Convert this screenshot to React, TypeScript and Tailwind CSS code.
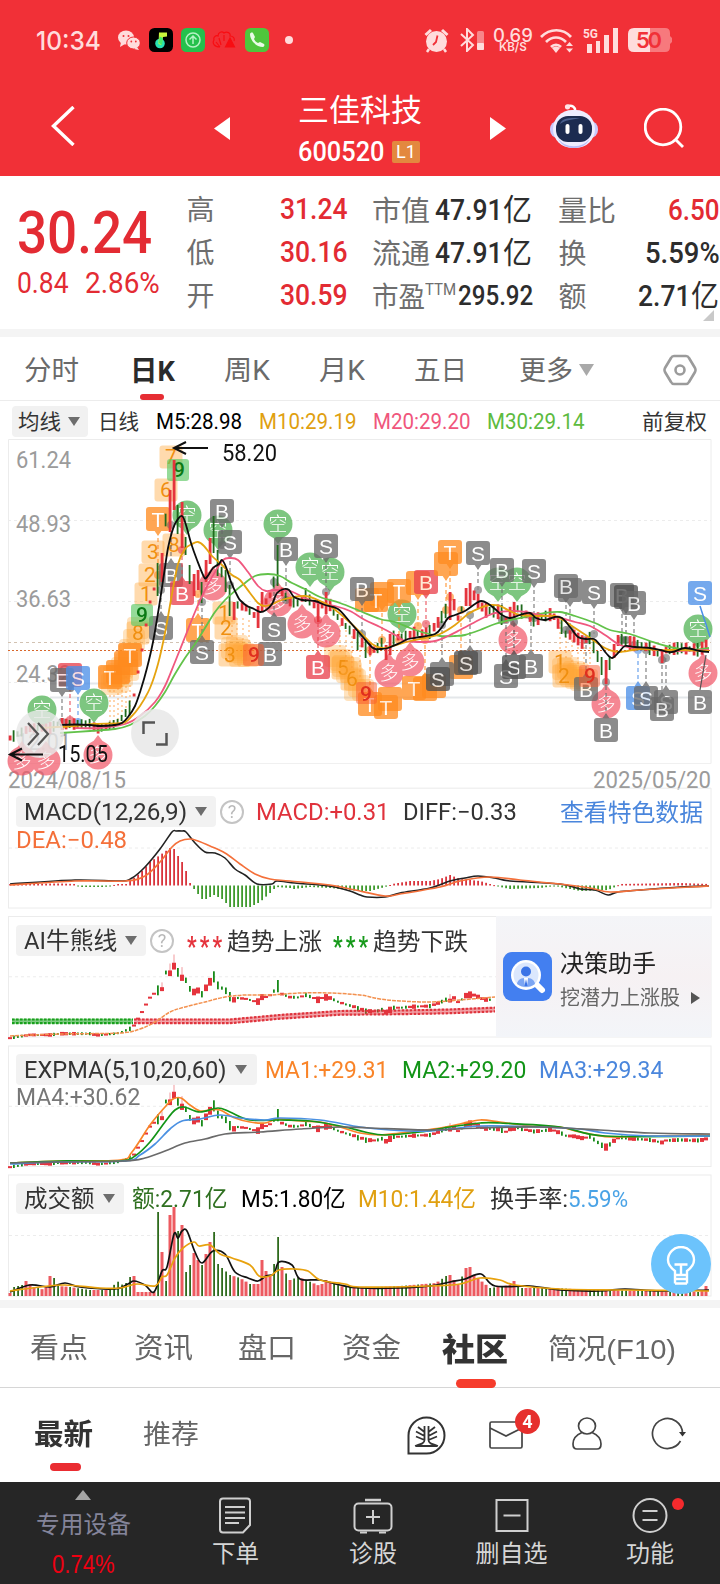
import { useLayoutEffect, useRef, useState } from "react";
import clsx from "clsx";

type Point = [number, number];

// "x,y x,y ..." -> points
function parse(raw: string): Point[] {
  return raw
    .trim()
    .split(/\s+/)
    .map((pair) => pair.split(",").map(Number) as Point);
}

function curve(raw: string) {
  const p = parse(raw);
  let d = `M${p[0][0]} ${p[0][1]}`;
  for (let i = 0; i < p.length - 1; i++) {
    const a = p[i - 1] ?? p[i];
    const b = p[i];
    const c = p[i + 1];
    const e = p[i + 2] ?? c;
    d += `C${b[0] + (c[0] - a[0]) / 6} ${b[1] + (c[1] - a[1]) / 6} ${c[0] - (e[0] - b[0]) / 6} ${c[1] - (e[1] - b[1]) / 6} ${c[0]} ${c[1]}`;
  }
  return d;
}

function valueAt(p: Point[], x: number) {
  if (x <= p[0][0]) return p[0][1];
  for (let i = 1; i < p.length; i++) {
    if (x <= p[i][0]) {
      const [x0, y0] = p[i - 1];
      const [x1, y1] = p[i];
      return y0 + ((y1 - y0) * (x - x0)) / (x1 - x0);
    }
  }
  return p[p.length - 1][1];
}

const noise = (i: number) => {
  const v = Math.sin(i * 12.9898) * 43758.5453;
  return v - Math.floor(v);
};

const RED = "#e5343d";
const GREEN = "#1f6a1c";

const price = parse(
  "10,738 20,733 30,728 50,728 60,724 75,724 90,724 97,729 115,724 122,718 130,708 134,695 138,672 142,650 146,625 150,602 154,589 158,580 162,566 166,520 170,510 174,490 178,518 182,525 186,546 190,574 194,588 198,580 202,592 206,570 210,550 214,535 218,565 222,572 226,585 230,600 234,610 238,605 246,608 254,615 258,618 262,600 268,602 274,582 278,566 282,592 290,602 298,603 306,595 314,605 322,605 328,602 340,620 350,630 360,640 366,648 376,650 384,642 388,649 392,638 400,637 418,633 430,632 440,620 448,608 452,598 458,618 466,600 470,590 476,598 484,610 500,612 506,620 514,606 524,613 534,620 552,614 560,625 566,634 574,636 582,642 590,638 598,655 604,672 608,668 616,648 622,640 630,643 650,648 660,655 666,650 680,648 700,650 709,642",
);

// [top, bottom, color] of the bars with a big range
const bigBars: Record<number, [number, number, string]> = {
  158: [563, 596, GREEN],
  162: [553, 582, RED],
  170: [490, 532, RED],
  174: [460, 510, RED],
  178: [505, 534, GREEN],
  182: [502, 548, RED],
  186: [537, 555, GREEN],
  190: [565, 584, GREEN],
  194: [574, 596, RED],
  198: [570, 590, RED],
  202: [582, 603, GREEN],
  206: [560, 582, RED],
  210: [538, 564, RED],
  214: [516, 553, GREEN],
  218: [550, 576, GREEN],
  226: [570, 592, GREEN],
  230: [585, 616, GREEN],
  234: [602, 620, RED],
  258: [606, 628, RED],
  262: [592, 612, RED],
  278: [545, 586, GREEN],
  306: [588, 602, GREEN],
  318: [600, 622, RED],
  326: [592, 614, RED],
  358: [632, 650, GREEN],
  366: [640, 658, GREEN],
  386: [645, 660, RED],
  390: [634, 655, RED],
  450: [592, 620, RED],
  466: [588, 606, RED],
  470: [583, 606, RED],
  502: [605, 625, GREEN],
  514: [602, 618, RED],
  562: [620, 634, GREEN],
  598: [651, 662, GREEN],
  602: [657, 675, GREEN],
  606: [660, 684, RED],
  614: [644, 658, RED],
  618: [635, 646, RED],
  662: [650, 663, RED],
  709: [636, 654, RED],
};

const candles = Array.from({ length: 175 }, (_, i) => {
  const x = 10 + i * 4;
  if (bigBars[x]) {
    const [top, bottom, color] = bigBars[x];
    return { x, top, bottom, color };
  }
  const mid = valueAt(price, x);
  const half = x > 130 && x < 158 ? 1.5 : 2.5 + noise(i) * 5 * (x < 130 ? 0.7 : 1);
  return {
    x,
    top: mid - half,
    bottom: mid + half,
    color: x > 130 && x < 158 ? RED : noise(i + 31) > 0.48 ? RED : GREEN,
  };
});

function MiniCandles({ base, limit = 720 }: { base: number; limit?: number }) {
  return (
    <g>
      {candles
        .filter((c) => c.x < limit)
        .map((c) => {
          const top = base - (725 - c.top) * 0.3;
          const height = Math.max(2, (c.bottom - c.top) * 0.3);
          const tall = c.color === RED && height > 8;
          return (
            <g key={c.x} fill={c.color === RED ? RED : "#188a1a"}>
              {tall && <rect x={c.x - 0.5} y={top} width="1" height={height} opacity=".5" />}
              <rect
                x={c.color === RED ? c.x - 2 : c.x - 1}
                y={tall ? top + height * 0.55 : top}
                width={c.color === RED ? 4 : 1.8}
                height={tall ? height * 0.45 : height}
              />
            </g>
          );
        })}
    </g>
  );
}

// Text squeezed horizontally into the width of its box
function Fit({ text, className }: { text: string; className?: string }) {
  const box = useRef<HTMLSpanElement>(null);
  const inner = useRef<HTMLSpanElement>(null);
  const [scale, setScale] = useState(1);

  useLayoutEffect(() => {
    if (box.current && inner.current) {
      setScale(box.current.clientWidth / inner.current.offsetWidth);
    }
  }, [text]);

  return (
    <span ref={box} className={clsx("block flex-none whitespace-nowrap leading-none", className)}>
      <span ref={inner} className="inline-block origin-left" style={{ transform: `scaleX(${scale})` }}>
        {text}
      </span>
    </span>
  );
}

function Caret({ className }: { className?: string }) {
  return (
    <svg viewBox="0 0 12 9" className={clsx("h-[9px] w-3 flex-none", className)}>
      <path d="M0 0H12L6 9Z" fill="currentColor" />
    </svg>
  );
}

function StatusBar() {
  return (
    <div className="flex h-20 items-center pl-[36px] text-[#ffdcdc]">
      <Fit text="10:34" className="mt-0.5 w-[65px] font-['Inter'] text-[26px] font-medium" />
      <svg viewBox="0 0 22 20" className="ml-[17px] h-5 w-[22px]">
        <ellipse cx="8" cy="7.5" rx="8" ry="7" fill="currentColor" />
        <path d="M3 12l-1 5 5-3z" fill="currentColor" />
        <ellipse cx="15.5" cy="13" rx="6.8" ry="6" fill="currentColor" stroke="#f13037" />
        <circle cx="5.5" cy="6" r="1" fill="#f13037" />
        <circle cx="10.5" cy="6" r="1" fill="#f13037" />
        <circle cx="13.3" cy="11.5" r=".9" fill="#f13037" />
        <circle cx="17.8" cy="11.5" r=".9" fill="#f13037" />
        <path d="M19 17l2 3-5-1z" fill="currentColor" />
      </svg>
      <svg viewBox="0 0 24 24" className="ml-[9px] size-6">
        <rect width="24" height="24" rx="5.5" fill="#000" />
        <circle cx="11" cy="15.500" r="4.800" fill="#28e2b4" />
        <path d="M10 4.500h8v4l-4 .6-1.500 8-3-1z" fill="#c8f53c" />
        <path d="M10.500 8.500l3.500 1.500-1 7-3-2z" fill="#45e86a" />
      </svg>
      <svg viewBox="0 0 24 24" className="ml-2 size-6" fill="none" stroke="#b5f2c4" strokeWidth="1.500">
        <rect width="24" height="24" rx="5.500" fill="#25c14c" stroke="none" />
        <circle cx="12" cy="12" r="7" />
        <path d="M12 16V8.500M8.500 11.500 12 8l3.500 3.500" />
      </svg>
      <svg viewBox="0 0 24 24" className="ml-[7px] size-6" fill="none" stroke="#f80d12" strokeWidth="1.200">
        <path d="M8 19C2 19 0 15 2 12c-1-3 2-5 4-4 0-4 4-5 6-3 3-2 7 0 6 3 3 0 5 2 4 5M8 19l-4-5M9 17 7 10M12 13V7" />
        <path d="M18 10l4.500 9h-9z" fill="#f80d12" />
      </svg>
      <svg viewBox="0 0 24 24" className="ml-[9px] size-6">
        <rect width="24" height="24" rx="5.500" fill="#4fc63c" />
        <path
          d="M5 6c0-1 2-2 3-1l2 4-1 2c1 2 2 3 4 4l2-1 4 2c1 1 0 3-1 3C11 19 5 12 5 6z"
          fill="#e9fbe6"
        />
      </svg>
      <span className="ml-4 size-2 rounded-full bg-[#ffdcdc]" />

      <svg viewBox="0 0 25 25" className="ml-[131px] h-[25px] w-[25px]" fill="none" stroke="currentColor">
        <circle cx="12.500" cy="13.500" r="10.500" fill="currentColor" stroke="none" />
        <path d="M1.500 7 7 2M23.500 7 18 2" strokeWidth="3" />
        <path d="M5 21l-2 3M20 21l2 3" strokeWidth="2.500" />
        <path d="M13.500 7.500 12 14l-3 3" stroke="#f13037" strokeWidth="1.800" />
      </svg>
      <svg viewBox="0 0 25 24" className="ml-[11px] h-6 w-[25px]" fill="none" stroke="currentColor" strokeWidth="2">
        <path d="M1 6 13 17 7 23V1l6 6L1 18" />
        <rect x="17" y="3" width="7" height="19" rx="1.500" fill="#f7868a" stroke="none" />
        <rect x="17" y="15" width="7" height="7" rx="1" fill="currentColor" stroke="none" />
      </svg>
      <div className="ml-2 flex w-10 flex-col items-center pb-px">
        <Fit text="0.69" className="w-10 font-['Inter'] text-[18px] font-medium" />
        <Fit text="KB/S" className="-mt-1 w-7 font-['Inter'] text-[12px] font-semibold" />
      </div>
      <svg viewBox="0 0 34 25" className="ml-[7px] h-[25px] w-[34px]" fill="none" stroke="currentColor">
        <path d="M1 9c9-9 22-9 30 0M6 14c6-6 14-6 20 0M11 19c3-3 7-3 10 0" strokeWidth="2.700" />
        <path d="M12 20c3-2 5-2 8 0l-4 5z" fill="currentColor" stroke="none" />
        <path d="M26 18l3.500-4 3.500 4zM26 20.500l3.500 4 3.500-4z" fill="currentColor" stroke="none" />
      </svg>
      <svg viewBox="0 0 35 25" className="ml-[9px] h-[25px] w-[35px]" fill="currentColor">
        <text x="0" y="10" fontSize="12" fontWeight="700" textLength="15" lengthAdjust="spacingAndGlyphs">
          5G
        </text>
        <path d="M4 16h5v9H4zM13 13h4v12h-4zM21 7h5v18h-5zM30 0h5v25h-5z" />
      </svg>
      <svg viewBox="0 0 44 24" className="ml-[10px] h-6 w-11">
        <path d="M22 0h15q5 0 5 5v3l2 2v4l-2 2v3q0 5-5 5H22z" fill="#f7797d" />
        <path d="M22 0H6Q0 0 0 6v12q0 6 6 6h16z" fill="#ffdcdc" />
        <text x="8" y="20" fontSize="22" fontWeight="600" fill="#f13037" textLength="26" className="font-['Inter']">
          50
        </text>
      </svg>
    </div>
  );
}

function Header() {
  return (
    <header className="h-44 bg-[#f13037] text-white">
      <StatusBar />
      <div className="flex h-24 items-center pl-[51px]">
        <svg viewBox="0 0 24 40" className="mb-1 h-10 w-6" fill="none" stroke="currentColor" strokeWidth="3.400">
          <path d="M22.500 1 2.500 20l20 19" />
        </svg>
        <svg viewBox="0 0 16 23" className="ml-[139px] h-[23px] w-4">
          <path d="M16 0v23L0 11.500z" fill="currentColor" />
        </svg>
        <div className="ml-[68px] w-[124px] pt-[5px]">
          <Fit text="三佳科技" className="-mt-px w-[124px] text-[31px]" />
          <div className="mt-[12px] flex items-center">
            <Fit text="600520" className="w-[86px] text-[28px] font-medium" />
            <span className="ml-2 flex h-[22px] w-[28px] items-center justify-center rounded-[2px] bg-[#e3883f] text-[18px]">
              L1
            </span>
          </div>
        </div>
        <svg viewBox="0 0 16 23" className="ml-[68px] h-[23px] w-4">
          <path d="M0 0v23l16-11.500z" fill="currentColor" />
        </svg>
        <svg viewBox="0 0 48 45" className="mb-1 ml-[44px] h-[45px] w-12">
          <path d="M25 8c1-5-3-7-7-6" fill="none" stroke="#fff" strokeWidth="2.500" />
          <circle cx="17.500" cy="2.800" r="2.600" fill="#ffe3e6" />
          <rect x="0" y="17" width="48" height="17" rx="8" fill="#c9c8fb" />
          <rect x="3" y="6" width="42" height="38" rx="19" fill="#eeedff" />
          <path d="M8 34c6 11 26 11 32 0 0 0-3 10-16 10S8 34 8 34z" fill="#b9bdf8" />
          <rect x="6" y="12" width="36" height="26" rx="12" fill="#1c2b50" />
          <path d="M10 20c2-7 12-6 20-6-9 2-15 2-20 6z" fill="#4a5f8f" />
          <rect x="15.500" y="20" width="4" height="10" rx="2" fill="#fff" />
          <rect x="28.500" y="20" width="4" height="10" rx="2" fill="#fff" />
        </svg>
        <svg viewBox="0 0 40 40" className="ml-[46px] size-10" fill="none" stroke="currentColor" strokeWidth="2.800">
          <circle cx="19" cy="19" r="17.800" />
          <path d="M31 31l8 8" />
        </svg>
      </div>
    </header>
  );
}

function Quote() {
  return (
    <section className="relative flex h-[153px] pl-[17px] text-[#6e6e6e]">
      <div className="w-[170px] text-[#e32b33]">
        <Fit text="30.24" className="mt-[27px] w-[135px] text-[60px] font-medium" />
        <div className="mt-1.5 flex">
          <Fit text="0.84" className="w-[52px] text-[29px]" />
          <Fit text="2.86%" className="ml-4 w-[75px] text-[29px]" />
        </div>
      </div>
      <div className="flex w-[28px] flex-col gap-[15px] pt-[21px] text-[28px]">
        <Fit text="高" className="w-[28px]" />
        <Fit text="低" className="w-[28px]" />
        <Fit text="开" className="w-[28px]" />
      </div>
      <div className="ml-[66px] flex flex-col gap-[13px] pt-[18px] text-[30px] font-medium text-[#e32b33]">
        <Fit text="31.24" className="w-[68px]" />
        <Fit text="30.16" className="w-[68px]" />
        <Fit text="30.59" className="w-[68px]" />
      </div>
      <div className="ml-[24px] flex flex-col gap-[13px] pt-[19px] text-[30px]">
        <div className="flex h-[30px] items-center">
          <Fit text="市值" className="mt-1 w-[58px] text-[28px]" />
          <Fit text="47.91" className="mb-px ml-[5px] w-[68px] font-medium text-[#2d2d2d]" />
          <Fit text="亿" className="w-[29px] text-[#2d2d2d]" />
        </div>
        <div className="flex h-[30px] items-center">
          <Fit text="流通" className="mt-1 w-[58px] text-[28px]" />
          <Fit text="47.91" className="mb-px ml-[5px] w-[68px] font-medium text-[#2d2d2d]" />
          <Fit text="亿" className="w-[29px] text-[#2d2d2d]" />
        </div>
        <div className="flex h-[30px] items-center">
          <Fit text="市盈" className="mt-1 w-[53px] text-[28px]" />
          <Fit text="TTM" className="mb-3 w-[31px] text-[16px]" />
          <Fit text="295.92" className="mb-px ml-[2px] w-[75px] text-[28px] font-medium text-[#2d2d2d]" />
        </div>
      </div>
      <div className="ml-[25px] flex w-[162px] flex-col gap-[13px] pt-[19px] text-[30px]">
        <div className="flex h-[30px] items-center justify-between">
          <Fit text="量比" className="mt-1 w-[58px] text-[28px]" />
          <Fit text="6.50" className="mb-px w-[52px] font-medium text-[#e32b33]" />
        </div>
        <div className="flex h-[30px] items-center justify-between">
          <Fit text="换" className="mt-1 w-[28px] text-[28px]" />
          <Fit text="5.59%" className="mb-px w-[75px] font-medium text-[#2d2d2d]" />
        </div>
        <div className="flex h-[30px] items-center">
          <Fit text="额" className="mt-1 w-[28px] text-[28px]" />
          <Fit text="2.71" className="mb-px ml-[52px] w-[53px] font-medium text-[#2d2d2d]" />
          <Fit text="亿" className="w-[28px] text-[#2d2d2d]" />
        </div>
      </div>
      <svg viewBox="0 0 10 10" className="absolute right-1.5 bottom-2 size-[11px]">
        <path d="M10 0v10H0z" fill="#c9c9c9" />
      </svg>
    </section>
  );
}

function PeriodTabs() {
  return (
    <nav className="relative flex h-16 items-center border-b border-[#ececec] pt-1.5 pl-[24px] text-[27px] text-[#6a6a6a]">
      <Fit text="分时" className="w-[55px]" />
      <Fit text="日K" className="ml-[51px] w-[45px] text-[28px] font-bold text-[#2b2b2b]" />
      <Fit text="周K" className="ml-[49px] w-[46px]" />
      <Fit text="月K" className="ml-[49px] w-[46px]" />
      <Fit text="五日" className="ml-[49px] w-[53px]" />
      <Fit text="更多" className="ml-[52px] w-[54px]" />
      <svg viewBox="0 0 15 12" className="mb-1 ml-1.5 h-3 w-[15px]">
        <path d="M0 0h15L7.500 12z" fill="#a9a9a9" />
      </svg>
      <svg viewBox="0 0 34 32" className="mb-1 ml-[69px] h-8 w-[34px]" fill="none" stroke="#9b9b9b" strokeWidth="2.600">
        <path d="M11 2h12q2 0 3 2l6 10q1 2 0 4l-6 10q-1 2-3 2H11q-2 0-3-2L2 18q-1-2 0-4L8 4q1-2 3-2z" />
        <circle cx="17" cy="16" r="4.500" />
      </svg>
      <span className="absolute bottom-0 left-[140px] h-1.5 w-6 rounded-full bg-[#e62d33]" />
    </nav>
  );
}

function AverageRow() {
  return (
    <div className="flex h-[38px] items-center pt-[3px] pl-3 text-[22px]">
      <div className="flex h-[31px] w-[76px] items-center rounded bg-[#f1f1f1] pl-[6px] text-[#333]">
        <Fit text="均线" className="mt-0.5 w-[43px] text-[21px]" />
        <Caret className="ml-[7px] text-[#6d6d6d]" />
      </div>
      <Fit text="日线" className="mt-0.5 ml-[10px] w-[41px] text-[21px] text-[#333]" />
      <Fit text="M5:28.98" className="ml-[17px] w-[86px] text-black" />
      <Fit text="M10:29.19" className="ml-[17px] w-[98px] text-[#e0a010]" />
      <Fit text="M20:29.20" className="ml-[16px] w-[98px] text-[#f0567c]" />
      <Fit text="M30:29.14" className="ml-[16px] w-[98px] text-[#5dbb3f]" />
      <Fit text="前复权" className="mt-0.5 ml-[57px] w-[65px] text-[21px] text-[#333]" />
    </div>
  );
}

const palette = {
  gray: "#686868",
  dark: "#4d4d4d",
  red: "#e9404c",
  orange: "#ff8a1e",
  blue: "#4a8fe8",
};

type Tag = { x: number; y: number; t: string; c: keyof typeof palette; stem?: number };

const tags: Tag[] = [
  { x: 70, y: 675, t: "", c: "red", stem: 720 },
  { x: 62, y: 680, t: "E", c: "gray", stem: 722 },
  { x: 78, y: 678, t: "S", c: "blue", stem: 722 },
  { x: 118, y: 672, t: "", c: "orange" },
  { x: 110, y: 677, t: "T", c: "orange" },
  { x: 126, y: 663, t: "", c: "orange" },
  { x: 130, y: 655, t: "T", c: "orange" },
  { x: 158, y: 519, t: "T", c: "orange", stem: 575 },
  { x: 171, y: 575, t: "B", c: "gray", stem: 525 },
  { x: 182, y: 593, t: "B", c: "red", stem: 550 },
  { x: 161, y: 628, t: "S", c: "gray", stem: 590 },
  { x: 198, y: 630, t: "T", c: "orange", stem: 594 },
  { x: 202, y: 652, t: "S", c: "gray", stem: 602 },
  { x: 222, y: 511, t: "B", c: "gray", stem: 545 },
  { x: 230, y: 542, t: "S", c: "gray", stem: 585 },
  { x: 286, y: 549, t: "B", c: "gray", stem: 600 },
  { x: 326, y: 546, t: "S", c: "gray", stem: 592 },
  { x: 274, y: 629, t: "S", c: "gray", stem: 582 },
  { x: 270, y: 654, t: "B", c: "gray" },
  { x: 318, y: 667, t: "B", c: "red", stem: 620 },
  { x: 367, y: 600, t: "", c: "orange" },
  { x: 382, y: 594, t: "", c: "orange", stem: 640 },
  { x: 376, y: 600, t: "T", c: "orange" },
  { x: 362, y: 589, t: "B", c: "gray", stem: 634 },
  { x: 399, y: 591, t: "T", c: "orange", stem: 640 },
  { x: 418, y: 583, t: "", c: "orange", stem: 626 },
  { x: 426, y: 582, t: "B", c: "red", stem: 624 },
  { x: 446, y: 564, t: "", c: "orange", stem: 610 },
  { x: 450, y: 552, t: "T", c: "orange", stem: 597 },
  { x: 478, y: 553, t: "S", c: "gray", stem: 590 },
  { x: 370, y: 704, t: "T", c: "orange", stem: 650 },
  { x: 390, y: 699, t: "", c: "orange" },
  { x: 386, y: 707, t: "T", c: "orange" },
  { x: 425, y: 689, t: "", c: "orange", stem: 640 },
  { x: 434, y: 686, t: "", c: "orange" },
  { x: 414, y: 688, t: "T", c: "orange" },
  { x: 461, y: 667, t: "", c: "orange", stem: 610 },
  { x: 442, y: 674, t: "", c: "gray", stem: 625 },
  { x: 438, y: 679, t: "S", c: "dark" },
  { x: 470, y: 662, t: "", c: "gray", stem: 615 },
  { x: 466, y: 663, t: "S", c: "dark" },
  { x: 502, y: 570, t: "B", c: "gray", stem: 620 },
  { x: 534, y: 571, t: "S", c: "gray", stem: 618 },
  { x: 570, y: 590, t: "", c: "gray", stem: 630 },
  { x: 566, y: 586, t: "B", c: "gray", stem: 630 },
  { x: 594, y: 592, t: "S", c: "gray", stem: 634 },
  { x: 622, y: 595, t: "B", c: "gray", stem: 640 },
  { x: 626, y: 597, t: "", c: "dark", stem: 640 },
  { x: 634, y: 603, t: "B", c: "gray", stem: 645 },
  { x: 506, y: 676, t: "S", c: "gray", stem: 620 },
  { x: 514, y: 667, t: "S", c: "dark", stem: 622 },
  { x: 531, y: 666, t: "B", c: "gray", stem: 616 },
  { x: 586, y: 689, t: "B", c: "gray", stem: 640 },
  { x: 606, y: 730, t: "B", c: "gray", stem: 682 },
  { x: 638, y: 698, t: "S", c: "blue", stem: 650 },
  { x: 646, y: 698, t: "S", c: "gray", stem: 650 },
  { x: 666, y: 702, t: "S", c: "gray", stem: 658 },
  { x: 662, y: 709, t: "B", c: "gray", stem: 660 },
  { x: 700, y: 593, t: "S", c: "blue" },
  { x: 700, y: 702, t: "B", c: "gray" },
];

const bears: Point[] = [
  [42, 710],
  [94, 703],
  [187, 515],
  [218, 530],
  [278, 524],
  [310, 567],
  [330, 572],
  [402, 614],
  [498, 582],
  [517, 582],
  [698, 629],
];

const bulls: Point[] = [
  [22, 761],
  [46, 761],
  [98, 755],
  [213, 586],
  [278, 602],
  [302, 624],
  [326, 633],
  [389, 673],
  [410, 662],
  [513, 640],
  [606, 704],
  [703, 673],
];

const counts: [number, number, string][] = [
  [171, 457, "7"],
  [166, 490, "6"],
  [174, 545, "8"],
  [153, 552, "3"],
  [150, 575, "2"],
  [146, 594, "1"],
  [138, 633, "8"],
  [224, 613, "1"],
  [226, 628, "2"],
  [230, 655, "3"],
  [560, 662, "1"],
  [564, 676, "2"],
  [343, 668, "5"],
  [352, 679, "6"],
];

const glows: Point[] = [
  ...parse("110,677 114,676 118,674 122,668 126,664 130,655 130,650 118,682 112,684 134,640 138,628 122,676 128,670"),
  ...parse("232,648 236,652 240,650 244,654 248,656 252,655 237,646 240,656"),
  ...parse("335,656 339,662 343,666 347,672 351,672 355,680 359,686 363,690 341,660 350,668 355,690"),
  ...parse("563,669 566,674 571,676 576,678 581,680 587,680 568,668 574,672 578,674"),
];

function MainChart() {
  return (
    <svg viewBox="0 439 720 349" className="relative block h-[349px] w-full overflow-visible">
      <g fill="none" stroke="#ececec">
        <path d="M8.500 763.500V439.500H711V763.500" />
        <path d="M8.500 763.500H711M8.500 788H711" stroke="#f0f0f0" />
        <path d="M8 520.500H711M8 601.500H711M8 682.500H50" strokeDasharray="3 3" />
        <path d="M50 683.500H711M50 697.500H711" stroke="#e4e7ea" strokeWidth="2" />
      </g>
      <path d="M8 642.500H711" stroke="#d2c2b2" strokeDasharray="3 3" />
      <path d="M8 650.500H711" stroke="#d9672b" strokeDasharray="2 2" />
      <g fill="#9b9b9b" fontSize="23">
        <text x="16" y="468" textLength="55" lengthAdjust="spacingAndGlyphs">61.24</text>
        <text x="16" y="532" textLength="55" lengthAdjust="spacingAndGlyphs">48.93</text>
        <text x="16" y="607" textLength="55" lengthAdjust="spacingAndGlyphs">36.63</text>
        <text x="16" y="682" textLength="55" lengthAdjust="spacingAndGlyphs">24.32</text>
        <text x="16" y="750" textLength="55" lengthAdjust="spacingAndGlyphs">12.01</text>
        <text x="8" y="788" textLength="118" lengthAdjust="spacingAndGlyphs">2024/08/15</text>
        <text x="593" y="788" textLength="118" lengthAdjust="spacingAndGlyphs">2025/05/20</text>
      </g>

      <g fill="#ff9205" opacity=".85">
        {glows.map(([x, y], i) => (
          <rect key={i} x={x - 11} y={y - 11} width="22" height="22" rx="4" opacity=".3" />
        ))}
      </g>
      <g fontSize="21" textAnchor="middle" fill="#f08f10">
        {counts.map(([x, y, t], i) => (
          <g key={i}>
            <rect x={x - 11.5} y={y - 11.5} width="23" height="23" rx="3" fill="#ffa73c" opacity=".42" />
            <text x={x} y={y + 7}>{t}</text>
          </g>
        ))}
      </g>

      <g stroke="#ff9b3c" strokeWidth="1.200" strokeDasharray="2 3" opacity=".7">
        <path d="M110 690V724M114 690V724M118 688V722M122 680V718M126 676V712M130 670V708" />
        <path d="M232 620V640M237 618V640M243 618V642M249 620V642M340 625V655M346 630V662M352 636V668M360 645V678" />
        <path d="M560 622V652M566 636V660M572 640V664M578 642V664M584 642V664M590 642V664" />
      </g>

      <g opacity=".72">
        {bears.map(([x, y]) => (
          <g key={`${x}-${y}`}>
            <path d={`M${x - 6} ${y + 12}L${x} ${y + 20}L${x + 6} ${y + 12}Z`} fill="#4bb04f" />
            <circle cx={x} cy={y} r="14.500" fill="#4bb04f" />
            <text x={x} y={y + 7} fontSize="19" fontWeight="300" textAnchor="middle" fill="#fff">空</text>
          </g>
        ))}
        {bulls.map(([x, y]) => (
          <g key={`${x}-${y}`}>
            <path d={`M${x - 6} ${y - 12}L${x} ${y - 20}L${x + 6} ${y - 12}Z`} fill="#f2596a" />
            <circle cx={x} cy={y} r="14.500" fill="#f2596a" />
            <text x={x} y={y + 7} fontSize="19" fontWeight="300" textAnchor="middle" fill="#fff">多</text>
          </g>
        ))}
      </g>

      <g>
        {tags.map(({ x, y, t, c, stem }, i) => (
          <g key={i} opacity=".76">
            {stem && (
              <>
                <path
                  d={`M${x} ${stem > y ? y + 12 : y - 12}V${stem}`}
                  stroke={palette[c]}
                  strokeWidth="1.300"
                  strokeDasharray="4 3"
                />
                <path
                  d={stem > y ? `M${x - 4} ${y + 11}h8l-4 6z` : `M${x - 4} ${y - 11}h8l-4 -6z`}
                  fill={palette[c]}
                />
                <circle cx={x} cy={stem} r="4" fill={palette[c]} opacity=".8" />
              </>
            )}
            <rect x={x - 12} y={y - 12} width="24" height="24" rx="3" fill={palette[c]} />
            <text x={x} y={y + 7.5} fontSize="21" textAnchor="middle" fill="#fff" className="font-['Liberation_Sans']">
              {t}
            </text>
          </g>
        ))}
        <path d="M700 606L710 637" stroke="#4a8fe8" strokeWidth="1.500" />
        <path d="M700 690L706 655" stroke="#555" strokeWidth="1.200" />
      </g>

      <g fontSize="21" fontWeight="500" textAnchor="middle">
        <rect x="167" y="459" width="22" height="22" rx="3" fill="#5cc763" opacity=".65" />
        <text x="179" y="477" fill="#0b7a15">9</text>
        <rect x="131" y="604" width="22" height="22" rx="3" fill="#5cc763" opacity=".65" />
        <text x="142" y="622" fill="#0b7a15">9</text>
        <rect x="243" y="644" width="21" height="22" rx="3" fill="#f9592e" opacity=".5" />
        <text x="254" y="662" fill="#e02f1f">9</text>
        <rect x="356" y="682" width="21" height="22" rx="3" fill="#f9592e" opacity=".5" />
        <text x="366" y="701" fill="#e02f1f">9</text>
        <rect x="579" y="665" width="21" height="22" rx="3" fill="#f9592e" opacity=".5" />
        <text x="590" y="683" fill="#e02f1f">9</text>
      </g>

      {candles.map((c) => (
        <rect
          key={c.x}
          x={c.x - 1.3}
          y={c.top}
          width={c.color === RED ? 2.8 : 1.8}
          height={c.bottom - c.top}
          fill={c.color}
        />
      ))}

      <g fill="none" strokeWidth="1.800">
        <path
          stroke="#62c24a"
          d={curve("60,733 90,731 115,729 130,725 145,716 155,706 165,692 175,674 185,658 195,644 205,628 215,612 225,600 235,591 245,583 255,576 268,574 280,576 292,583 305,589 320,597 340,603 360,611 380,619 395,622 410,628 425,633 440,636 455,636 465,635 480,630 495,624 510,620 525,617 545,613 560,612 575,616 595,623 610,630 630,634 650,641 670,647 690,650 709,648")}
        />
        <path
          stroke="#f0587f"
          d={curve("75,728 100,728 125,724 140,716 155,702 165,686 175,662 185,637 195,612 205,590 215,572 223,560 230,558 238,560 248,572 258,586 266,591 275,590 290,591 305,598 318,603 335,606 350,611 365,620 380,627 395,635 405,641 420,642 435,641 448,636 460,630 475,622 485,617 495,613 510,611 525,612 540,615 560,618 575,622 590,626 605,635 620,645 635,648 650,649 670,651 709,650")}
        />
        <path
          stroke="#e5a30f"
          d={curve("40,728 75,726 95,724 122,723 130,718 140,706 150,688 158,664 165,633 172,594 178,564 185,549 192,544 198,542 204,546 212,556 222,565 232,575 240,580 250,593 258,603 264,606 270,605 285,599 305,596 318,600 330,606 345,618 360,632 372,644 382,648 393,646 410,641 425,638 440,634 455,625 468,614 480,608 490,605 500,606 508,610 520,615 540,616 555,616 563,620 575,628 590,638 605,648 618,652 640,649 660,650 680,650 709,651")}
        />
        <path
          stroke="#0d0d0d"
          d={curve("60,725 75,724.5 90,725 100,726 115,725 122,723 128,717 135,706 141,689 147,668 153,642 159,607 164,574 168,548 172,532 176,522 182,516 186,525 191,543 197,560 204,577 207,577 213,568 219,564 222,560 226,567 231,582 238,597 241,601 247,606 254,609 260,612 266,610 272,604 277,593 284,589 289,590 294,597 302,600 315,601 325,605 338,609 350,622 362,636 373,648 380,649 388,648 400,643 408,639 420,637 435,634 442,627 448,618 455,615 465,611 475,604 481,601 487,603 495,609 502,615 510,618 520,615 530,613 536,618 545,620 555,617 562,618 570,627 578,637 586,639 594,639 600,645 606,653 612,658 619,652 625,646 635,647 650,648 660,650 672,652 685,648 700,651 709,652")}
        />
      </g>

      <path d="M208 448H175M186 442L174 448L186 454" fill="none" stroke="#111" strokeWidth="2" />
      <g fill="#e8e8e8">
        <circle cx="40" cy="734" r="24" opacity=".82" />
        <circle cx="155" cy="733" r="24" opacity=".88" />
      </g>
      <g fill="none" stroke="#555">
        <path d="M28 723L38 734L28 745M38 723L48 734L38 745" strokeWidth="2.200" />
        <path d="M143.500 734V722.500H155M156 744.500H166.500V733" strokeWidth="2.500" />
      </g>
      <path d="M43 754.500H11M22 748.500L10 754.500L22 760.500" fill="none" stroke="#111" strokeWidth="2" />
      <g fill="#111" fontSize="23">
        <text x="222" y="461" textLength="55" lengthAdjust="spacingAndGlyphs">58.20</text>
        <text x="58" y="762" textLength="50" lengthAdjust="spacingAndGlyphs">15.05</text>
      </g>
    </svg>
  );
}

function PanelFrame({ top, bottom }: { top: number; bottom: number }) {
  return (
    <g fill="none" stroke="#ececec">
      <rect x="8.500" y={top} width="702.500" height={bottom - top} />
      <path d={`M9 ${(top + bottom) / 2}H711`} strokeDasharray="3 3" />
    </g>
  );
}

function Chip({ text, textWidth, className }: { text: string; textWidth: string; className: string }) {
  return (
    <div className={clsx("flex h-[31px] flex-none items-center rounded bg-[#f1f1f1]/95 pl-2 text-[#333]", className)}>
      <Fit text={text} className={clsx("mt-0.5", textWidth)} />
      <Caret className="ml-2 text-[#6d6d6d]" />
    </div>
  );
}

function Help({ className }: { className: string }) {
  return (
    <span
      className={clsx(
        "flex size-6 flex-none items-center justify-center rounded-full border-2 border-[#c4c4c4] text-[18px] leading-none text-[#b8b8b8]",
        className,
      )}
    >
      ?
    </span>
  );
}

const macdBars = parse(
  "10,884 60,883.5 75,884 80,887 105,887 118,884 126,884 130,881 140,873 150,862 160,855 170,848 174,849 178,856 182,862 186,871 190,883 194,889 202,899 206,899 214,895 222,899 230,907 250,907 260,902 270,893 276,887 290,888 294,889 310,887 330,888 350,890 360,891 370,891 385,887 388,886 392,884 410,881 430,881 440,879 450,875 460,879 480,881 490,884 497,886 500,887 510,889 540,888 555,886 565,888 580,891 608,890 615,887 620,884 680,883 709,884",
);

function MacdPanel() {
  return (
    <section className="relative h-[124px] text-[23.5px]">
      <svg viewBox="0 788 720 124" className="absolute inset-0 h-full w-full">
        <PanelFrame top={788} bottom={908} />
        {Array.from({ length: 175 }, (_, i) => {
          const x = 10 + i * 4;
          const y = valueAt(macdBars, x);
          const up = y < 885.5;
          return (
            <rect
              key={x}
              x={x - 0.8}
              y={up ? y : 885.5}
              width="1.800"
              height={Math.max(1, Math.abs(y - 885.5))}
              fill={up ? "#d9343c" : "#3f9a2d"}
            />
          );
        })}
        <path
          fill="none"
          stroke="#222"
          strokeWidth="1.600"
          d={curve("10,884 75,880 120,881 132,878 145,867 160,849 172,832 176,831 182,831 186,832 195,843 205,852 215,853 225,858 235,869 245,875 257,884 272,884 277,881 295,883 320,885 335,887 350,891 360,895 367,897 385,897 400,893 430,888 450,881 465,878 478,876 495,878 510,881 560,884 580,889 595,890 608,895 618,892 640,890 680,887 709,886")}
        />
        <path
          fill="none"
          stroke="#f4703a"
          strokeWidth="1.600"
          d={curve("10,885 75,881 125,881 145,876 160,862 172,847 180,841 190,839 198,841 210,846 225,853 240,864 255,874 270,879 290,881 330,885 355,890 385,896 400,894 440,887 460,881 490,877 520,880 560,884 590,888 610,892 640,890 690,887 709,886")}
        />
      </svg>
      <div className="relative flex items-center pt-2 pl-4">
        <Chip text="MACD(12,26,9)" textWidth="w-[163px]" className="w-[200px]" />
        <Help className="ml-1" />
        <Fit text="MACD:+0.31" className="mt-0.5 ml-[12px] w-[134px] text-[#e0323c]" />
        <Fit text="DIFF:−0.33" className="mt-0.5 ml-[13px] w-[114px] text-[#333]" />
        <Fit text="查看特色数据" className="mt-1 ml-[43px] w-[143px] text-[#4a86dc]" />
      </div>
      <Fit text="DEA:−0.48" className="relative mt-0.5 ml-4 w-[111px] text-[#f4703a]" />
    </section>
  );
}

function AiPanel() {
  return (
    <section className="relative flex h-[129px] text-[23.5px]">
      <svg viewBox="0 912 720 129" className="absolute inset-0 h-full w-full">
        <PanelFrame top={916.5} bottom={1037} />
        <MiniCandles base={1034} limit={494} />
        <g fill="none" stroke="#18a01c">
          <path d="M12 1021.300H133" strokeWidth="5" opacity=".55" />
          <path d="M12 1019.500H133M12 1023.200H133" strokeWidth="2.200" strokeDasharray="2.600 1.400" />
        </g>
        <g fill="none" stroke="#df343d">
          <path d="M134 1021.300H230L280 1016.800L340 1012.800L400 1012.300L450 1011.300L495 1009.500" strokeWidth="5" opacity=".45" />
          <path
            d="M134 1019.500H230L280 1015L340 1011L400 1010.500L450 1009.500L495 1007.700M134 1023.200H230L280 1018.700L340 1014.700L400 1014.200L450 1013.200L495 1011.400"
            strokeWidth="2.200"
            strokeDasharray="2.600 1.400"
          />
        </g>
        <path
          fill="none"
          stroke="#f3914f"
          strokeWidth="1.500"
          strokeDasharray="4 1"
          d={curve("10,1036 60,1034 120,1033 140,1029 155,1022 170,1012 185,1007 205,1002 225,997 245,995 270,995 300,993 330,993 360,995 380,999 400,1001 430,1002 460,1000 495,997")}
        />
      </svg>
      <div className="relative mt-[13px] flex h-[31px] w-[480px] items-center pl-4 text-[#333]">
        <Chip text="AI牛熊线" textWidth="w-[93px]" className="w-[130px]" />
        <Help className="ml-1" />
        <Fit text="***" className="ml-[13px] h-4 w-[38px] text-[28px] font-bold tracking-[4px] text-[#e5343d]" />
        <Fit text="趋势上涨" className="mt-1 ml-0.5 w-[95px]" />
        <Fit text="***" className="ml-[11px] h-4 w-[38px] text-[28px] font-bold tracking-[4px] text-[#189a1c]" />
        <Fit text="趋势下跌" className="mt-1 ml-0.5 w-[95px]" />
      </div>
      <div className="relative mt-1 ml-4 flex h-[121px] w-[215px] items-center bg-linear-to-b from-[#f4f5f8] via-[#f6f1f3] to-[#f3f5f9] pl-[7px]">
        <svg viewBox="0 0 49 49" className="size-[49px]">
          <rect width="49" height="49" rx="9" fill="#437ff0" />
          <path d="M35 34l4 4" stroke="#fff" strokeWidth="6" strokeLinecap="round" />
          <circle cx="23" cy="23" r="15" fill="#fff" />
          <circle cx="23" cy="23" r="12.500" fill="#dbe7fd" />
          <circle cx="23" cy="19.500" r="5" fill="#3a73e6" />
          <path d="M14 32c1-5 4-6 9-6s8 1 9 6c-5 4-13 4-18 0z" fill="#7ba5f3" />
          <path d="M21 26h4l-1 8h-2z" fill="#fff" />
          <path d="M23 27l1.500 7h-3z" fill="#3a73e6" />
        </svg>
        <div className="ml-2 pt-2">
          <Fit text="决策助手" className="w-[96px] text-[#222]" />
          <div className="mt-[11px] flex items-center">
            <Fit text="挖潜力上涨股" className="w-[120px] text-[20px] text-[#666]" />
            <svg viewBox="0 0 9 12" className="ml-[11px] h-3 w-[9px]">
              <path d="M0 0v12l9-6z" fill="#555" />
            </svg>
          </div>
        </div>
      </div>
    </section>
  );
}

function ExpmaPanel() {
  return (
    <section className="relative h-[129px] text-[23.5px]">
      <svg viewBox="0 1041 720 129" className="absolute inset-0 h-full w-full">
        <PanelFrame top={1046} bottom={1166.5} />
        <MiniCandles base={1163} />
        <g fill="none" strokeWidth="1.700">
          <path
            stroke="#f98428"
            d={curve("10,1163 60,1161 120,1160 132,1152 150,1125 165,1107 173,1099 181,1098 190,1105 200,1111 210,1110 220,1110 235,1118 250,1122 265,1123 278,1119 300,1121 320,1122 340,1127 360,1133 380,1135 400,1133 440,1128 460,1124 480,1120 500,1122 530,1126 560,1127 580,1132 610,1137 650,1136 710,1135")}
          />
          <path
            stroke="#129417"
            d={curve("10,1163 60,1161 120,1161 135,1156 150,1142 165,1122 175,1110 184,1107 200,1112 218,1108 230,1112 250,1120 280,1120 310,1121 345,1127 365,1132 385,1135 420,1132 450,1127 480,1123 500,1123 560,1127 605,1136 710,1136")}
          />
          <path
            stroke="#4a90e2"
            d={curve("10,1164 60,1162 125,1161 140,1155 155,1144 170,1129 182,1121 200,1119 220,1115 240,1118 265,1120 280,1118 320,1120 360,1127 390,1130 430,1131 480,1126 540,1127 580,1129 605,1133 650,1136 710,1136")}
          />
          <path
            stroke="#6a6a6a"
            d={curve("10,1163 60,1162 125,1161 145,1158 165,1151 185,1143 205,1139 225,1134 260,1132 300,1129 340,1127 370,1128 430,1130 480,1128 540,1127 600,1130 650,1133 710,1134")}
          />
        </g>
      </svg>
      <div className="relative flex items-center pt-[13px] pl-4">
        <Chip text="EXPMA(5,10,20,60)" textWidth="w-[203px]" className="w-[241px]" />
        <Fit text="MA1:+29.31" className="mt-0.5 ml-[8px] w-[123px] text-[#f98428]" />
        <Fit text="MA2:+29.20" className="mt-0.5 ml-[14px] w-[124px] text-[#129417]" />
        <Fit text="MA3:+29.34" className="mt-0.5 ml-[13px] w-[124px] text-[#4a86dc]" />
      </div>
      <Fit text="MA4:+30.62" className="relative mt-px ml-4 w-[124px] text-[#777]" />
    </section>
  );
}

const turnover = parse(
  "10,1293 14,1287 22,1285 26,1281 34,1287 45,1290 50,1276 54,1278 58,1286 70,1287 90,1290 110,1290 117,1281 124,1286 130,1277 134,1276 138,1292 154,1292 158,1212 162,1252 166,1281 170,1215 174,1207 178,1231 182,1225 186,1272 190,1265 194,1253 198,1260 202,1265 206,1254 210,1242 214,1232 218,1264 222,1268 230,1275 240,1278 250,1284 258,1284 262,1260 266,1271 270,1275 274,1264 278,1237 282,1267 290,1280 298,1277 306,1280 320,1286 326,1280 340,1286 360,1288 400,1286 436,1283 446,1276 450,1275 458,1285 466,1268 470,1267 474,1275 480,1280 490,1288 510,1285 514,1281 520,1288 550,1288 600,1290 650,1291 700,1292 706,1286",
);

function TurnoverPanel() {
  return (
    <section className="relative h-[130px] text-[23.5px]">
      <svg viewBox="0 1170 720 130" className="absolute inset-0 h-full w-full">
        <PanelFrame top={1175} bottom={1296} />
        {candles.map((c) => {
          const y = valueAt(turnover, c.x);
          const up = c.color === RED;
          return (
            <rect
              key={c.x}
              x={c.x - (up ? 1.5 : 0.8)}
              y={y}
              width={up ? 3 : 1.8}
              height={1296 - y}
              fill={up ? "#ed5a60" : "#2f6b1d"}
            />
          );
        })}
        <g fill="none" strokeWidth="1.700">
          <path
            stroke="#111"
            d={curve("10,1292 30,1285 50,1287 65,1283 80,1287 115,1289 128,1284 134,1281 145,1285 154,1292 162,1271 167,1267 174,1234 178,1238 182,1231 187,1231 195,1252 202,1263 213,1251 225,1254 235,1272 248,1278 258,1281 266,1276 274,1274 279,1262 292,1265 300,1279 320,1280 340,1285 360,1288 400,1288 430,1286 450,1282 465,1279 481,1274 495,1286 530,1286 560,1290 600,1291 625,1289 660,1291 709,1290")}
          />
          <path
            stroke="#e8a20e"
            d={curve("10,1291 40,1287 65,1285 100,1288 120,1288 137,1284 155,1286 162,1277 167,1275 175,1258 183,1248 194,1242 199,1246 210,1245 220,1254 232,1258 250,1265 259,1276 270,1276 279,1270 295,1269 308,1271 320,1280 345,1284 360,1287 430,1286 460,1284 480,1278 500,1280 515,1285 560,1289 625,1290 709,1291")}
          />
        </g>
      </svg>
      <div className="relative flex items-center pt-[13px] pl-4">
        <Chip text="成交额" textWidth="w-[71px]" className="w-[108px]" />
        <Fit text="额:2.71亿" className="mt-0.5 ml-[8px] w-[96px] text-[#2f7020]" />
        <Fit text="M5:1.80亿" className="mt-0.5 ml-[13px] w-[105px] text-black" />
        <Fit text="M10:1.44亿" className="mt-0.5 ml-[12px] w-[118px] text-[#e0a010]" />
        <Fit text="换手率:" className="mt-0.5 ml-[14px] w-[78px] text-[#333]" />
        <Fit text="5.59%" className="mt-0.5 w-[60px] text-[#4aa3e6]" />
      </div>
      <button
        type="button"
        className="absolute top-[64px] left-[651px] flex size-[60px] items-center justify-center rounded-full bg-[#6cc3fc]"
      >
        <svg viewBox="0 0 30 40" className="mt-1 h-10 w-[30px]" fill="none" stroke="#fff" strokeWidth="2.400">
          <path d="M9 29v-4C5 22 2 19 2 14a13 13 0 0 1 26 0c0 5-3 8-7 11v4M9 29h12M9 37.500h12M9 29v8.500M21 29v8.500M9 33h12M8.500 18.500h13M15 18.500V29" />
        </svg>
      </button>
    </section>
  );
}

function SectionTabs() {
  return (
    <nav className="relative flex h-20 items-center border-b border-[#d6d6d6] pt-1 pl-[30px] text-[28.5px] text-[#666]">
      <Fit text="看点" className="w-[58px]" />
      <Fit text="资讯" className="ml-[46px] w-[59px]" />
      <Fit text="盘口" className="ml-[45px] w-[58px]" />
      <Fit text="资金" className="ml-[46px] w-[59px]" />
      <Fit text="社区" className="ml-[41px] w-[66px] text-[32px] font-black text-[#333]" />
      <Fit text="简况(F10)" className="ml-[40px] w-[128px] font-['Liberation_Sans','Noto_Sans_CJK_SC',sans-serif]" />
      <span className="absolute -bottom-px left-[456px] h-[9px] w-10 rounded-full bg-[#f63c2c]" />
    </nav>
  );
}

function FeedRow() {
  return (
    <div className="relative flex h-[94px] items-center pl-[34px]">
      <Fit text="最新" className="w-[59px] text-[29px] font-bold text-[#333]" />
      <Fit text="推荐" className="ml-[50px] w-[56px] text-[27px] text-[#666]" />
      <svg viewBox="0 0 39 39" className="ml-[208px] size-[39px]" fill="none" stroke="#333" strokeWidth="2">
        <path d="M1.500 37.500V19.500A18 18 0 1 1 19.500 37.500Z" />
        <path
          d="M8 30C15 28 17.500 27 17.500 24V10M31 30C24 28 21.500 27 21.500 24V10M17.500 16 11 11M17.500 20 9 15.500M17.500 24 9 20.500M21.500 16 28 11M21.500 20 30 15.500M21.500 24 30 20.500M9 30h21"
          strokeWidth="1.800"
        />
      </svg>
      <svg viewBox="0 0 34 28" className="ml-[43px] h-7 w-[34px]" fill="none" stroke="#444" strokeWidth="1.700">
        <rect x="1" y="1" width="32" height="26" rx="1.500" />
        <path d="M1 7l16 8L33 7" />
      </svg>
      <svg viewBox="0 0 30 33" className="mb-1 ml-[49px] h-[33px] w-[30px]" fill="none" stroke="#444" strokeWidth="1.700">
        <ellipse cx="15" cy="9" rx="8.500" ry="8" />
        <path d="M10 15.500C4 18 1 22 1 27q0 5 4 5h20q4 0 4-5C29 22 26 18 20 15.500" />
      </svg>
      <svg viewBox="0 0 36 33" className="mb-1 ml-[49px] h-[33px] w-9" fill="none" stroke="#444" strokeWidth="1.700">
        <path d="M29.500 24A15 15 0 1 1 31.500 16.500" />
        <path d="M28 15h7l-3.500 4.500z" fill="#333" stroke="none" />
      </svg>
      <span className="absolute top-[21px] left-[515px] flex size-[25px] items-center justify-center rounded-full bg-[#e62f2d] text-[18px] font-bold text-white">
        4
      </span>
      <span className="absolute bottom-[11px] left-[50px] h-2 w-[31px] rounded-full bg-[#ea2c31]" />
    </div>
  );
}

function BottomBar() {
  return (
    <footer className="flex h-[102px] bg-[#262626] text-[24px] text-[#d6d6d6]">
      <div className="flex w-[166px] flex-col items-center pt-2">
        <svg viewBox="0 0 16 10" className="h-2.5 w-4">
          <path d="M8 0l8 10H0z" fill="#a5a5a5" />
        </svg>
        <Fit text="专用设备" className="mt-[13px] w-[95px] text-[#84849a]" />
        <Fit text="0.74%" className="mt-3.5 w-[63px] font-['Liberation_Sans'] text-[26px] text-[#ee0012]" />
      </div>
      <div className="flex w-[138px] flex-col items-center pt-[15px]">
        <svg viewBox="0 0 34 37" className="h-[37px] w-[34px]" fill="none" stroke="#cfcfcf" strokeWidth="2">
          <path d="M5 1.500h24q3 0 3 3V28l-7 7.500H5q-3 0-3-3v-28q0-3 3-3z" />
          <path d="M7 10h20M7 15.500h20M7 21h20M7 26h14" />
        </svg>
        <Fit text="下单" className="mt-2 w-[47px]" />
      </div>
      <div className="flex w-[138px] flex-col items-center pt-[15px]">
        <svg viewBox="0 0 40 37" className="h-[37px] w-10" fill="none" stroke="#cfcfcf" strokeWidth="2">
          <path d="M12 3h16" strokeWidth="2.500" />
          <rect x="1.500" y="6.500" width="37" height="27" rx="4" />
          <path d="M20 13v14M13 20h14M7 35.500h7M26 35.500h7" />
        </svg>
        <Fit text="诊股" className="mt-2 w-[48px]" />
      </div>
      <div className="flex w-[139px] flex-col items-center pt-[15px]">
        <svg viewBox="0 0 34 37" className="h-[37px] w-[34px]" fill="none" stroke="#cfcfcf" strokeWidth="2">
          <rect x="1.500" y="3" width="31" height="31" />
          <path d="M8.500 18.500h17" />
        </svg>
        <Fit text="删自选" className="mt-2 w-[72px]" />
      </div>
      <div className="relative flex w-[138px] flex-col items-center pt-[15px]">
        <svg viewBox="0 0 36 37" className="h-[37px] w-9" fill="none" stroke="#cfcfcf" strokeWidth="2">
          <circle cx="18" cy="18.500" r="16.500" />
          <path d="M10.500 14h15M10.500 23h15" />
        </svg>
        <Fit text="功能" className="mt-2 w-[48px]" />
        <span className="absolute top-4 left-[91px] size-3 rounded-full bg-[#f42a2d]" />
      </div>
    </footer>
  );
}

export default function App() {
  return (
    <div className="w-[720px] overflow-hidden bg-white font-['Roboto','Noto_Sans_CJK_SC',sans-serif]">
      <Header />
      <Quote />
      <div className="h-2 bg-[#f4f4f4]" />
      <PeriodTabs />
      <AverageRow />
      <MainChart />
      <MacdPanel />
      <AiPanel />
      <ExpmaPanel />
      <TurnoverPanel />
      <div className="h-2 bg-[#f4f4f4]" />
      <SectionTabs />
      <FeedRow />
      <BottomBar />
    </div>
  );
}
